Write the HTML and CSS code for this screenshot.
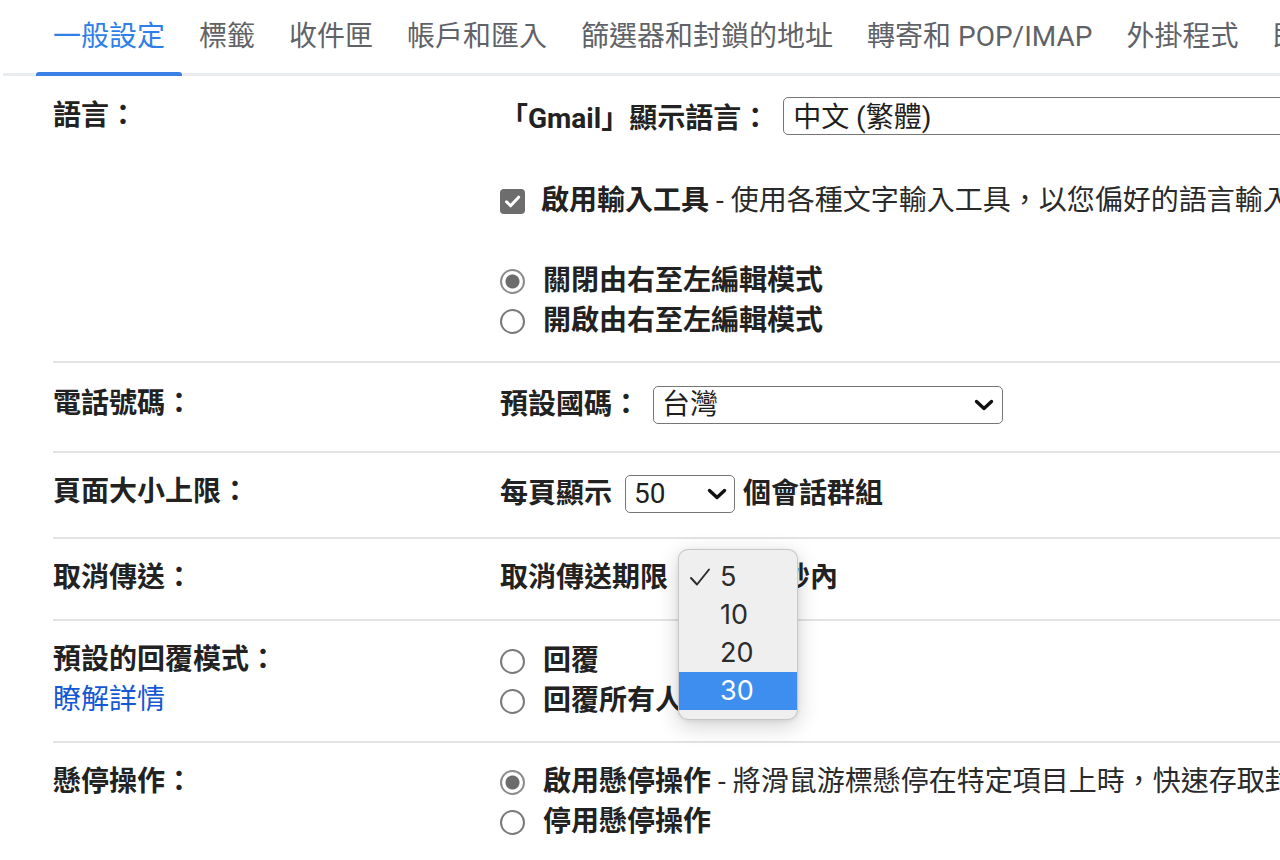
FILE: index.html
```html
<!DOCTYPE html>
<html lang="zh-Hant">
<head>
<meta charset="utf-8">
<title>設定</title>
<link rel="stylesheet" href="styles.css">
</head>
<body>
<nav class="tabs">
  <div class="tab active">一般設定</div>
  <div class="tab">標籤</div>
  <div class="tab">收件匣</div>
  <div class="tab">帳戶和匯入</div>
  <div class="tab">篩選器和封鎖的地址</div>
  <div class="tab">轉寄和 POP/IMAP</div>
  <div class="tab">外掛程式</div>
  <div class="tab">即時通訊和視訊會議</div>
</nav>

<main class="settings">
  <section class="row row-lang">
    <div class="label">語言：</div>
    <div class="value">
      <div class="line line-select">
        <span class="strong lang-caption">「Gmail」顯示語言：</span>
        <div class="select select-lang"><span class="select-text">中文 (繁體)</span></div>
      </div>
      <div class="line line-check">
        <span class="checkbox"><svg viewBox="0 0 25 25" width="25" height="25"><path d="M6.5 12.8 L10.6 16.8 L18.6 8.2" fill="none" stroke="#fff" stroke-width="3" stroke-linecap="round" stroke-linejoin="round"/></svg></span>
        <span class="strong">啟用輸入工具</span><span class="desc">&nbsp;- 使用各種文字輸入工具，以您偏好的語言輸入文字 - 編輯工具 - 瞭解詳情</span>
      </div>
      <div class="group group-rtl">
        <div class="line"><span class="radio checked"></span><span class="strong">關閉由右至左編輯模式</span></div>
        <div class="line"><span class="radio"></span><span class="strong">開啟由右至左編輯模式</span></div>
      </div>
    </div>
  </section>

  <section class="row row-phone">
    <div class="label">電話號碼：</div>
    <div class="value">
      <div class="line line-select">
        <span class="strong">預設國碼：</span>
        <div class="select select-phone"><span class="select-text">台灣</span>
          <svg class="chev" viewBox="0 0 20 12" width="20" height="12"><path d="M2.5 2.5 L10 9.5 L17.5 2.5" fill="none" stroke="#111" stroke-width="3.4" stroke-linecap="round" stroke-linejoin="round"/></svg>
        </div>
      </div>
    </div>
  </section>

  <section class="row row-page">
    <div class="label">頁面大小上限：</div>
    <div class="value">
      <div class="line line-select">
        <span class="strong">每頁顯示</span>
        <div class="select select-page"><span class="select-text">50</span>
          <svg class="chev" viewBox="0 0 20 12" width="20" height="12"><path d="M2.5 2.5 L10 9.5 L17.5 2.5" fill="none" stroke="#111" stroke-width="3.4" stroke-linecap="round" stroke-linejoin="round"/></svg>
        </div>
        <span class="strong after">個會話群組</span>
      </div>
    </div>
  </section>

  <section class="row row-undo">
    <div class="label">取消傳送：</div>
    <div class="value">
      <div class="line line-select">
        <span class="strong">取消傳送期限</span>
        <div class="select-wrap">
          <div class="select select-undo"><span class="select-text">5</span></div>
          <div class="popup">
            <div class="opt selected"><svg class="tick" viewBox="0 0 22 20" width="22" height="20"><path d="M2 11 L8 17.5 L20 2.5" fill="none" stroke="#2e2e2e" stroke-width="2" stroke-linecap="round" stroke-linejoin="round"/></svg>5</div>
            <div class="opt">10</div>
            <div class="opt">20</div>
            <div class="opt hl">30</div>
          </div>
        </div>
        <span class="strong after">秒內</span>
      </div>
    </div>
  </section>

  <section class="row row-reply">
    <div class="label">預設的回覆模式：<br><a class="link" href="#">瞭解詳情</a></div>
    <div class="value">
      <div class="line"><span class="radio"></span><span class="strong">回覆</span></div>
      <div class="line"><span class="radio"></span><span class="strong">回覆所有人</span></div>
    </div>
  </section>

  <section class="row row-hover">
    <div class="label">懸停操作：</div>
    <div class="value">
      <div class="line"><span class="radio checked"></span><span class="strong">啟用懸停操作</span><span class="desc">&nbsp;- 將滑鼠游標懸停在特定項目上時，快速存取封存、刪除、標示為已讀和延後功能。</span></div>
      <div class="line"><span class="radio"></span><span class="strong">停用懸停操作</span></div>
    </div>
  </section>
</main>
</body>
</html>
```
FILE: styles.css
```css
html, body {
  margin: 0;
  padding: 0;
}

body {
  width: 1280px;
  height: 860px;
  overflow: hidden;
  background: #ffffff;
  font-family: Roboto, "Noto Sans CJK TC", "Noto Sans", sans-serif;
  color: #202124;
}

/* Tabs */
.tabs {
  display: flex;
  height: 73px;
  margin-left: 3px;
  padding-left: 33px;
  border-bottom: 3px solid #eaedf0;
  white-space: nowrap;
}

.tab {
  flex: none;
  position: relative;
  padding: 0 17px;
  font-size: 28px;
  line-height: 73px;
  color: #5f6368;
}

.tab.active {
  color: #2f7fe9;
}

.tab.active::after {
  content: "";
  position: absolute;
  left: 0;
  right: 0;
  bottom: -3px;
  height: 4px;
  background: #3a80e6;
  border-radius: 3px 3px 0 0;
}

/* Settings rows */
.settings {
  margin-left: 53px;
}

.row {
  display: grid;
  grid-template-columns: 447px 1fr;
  border-bottom: 2px solid #e3e3e3;
}

.row:last-child {
  border-bottom: none;
}

.label {
  padding-top: 19px;
  font-size: 28px;
  line-height: 40px;
  font-weight: 700;
  color: #222;
  white-space: nowrap;
}

.value {
  padding: 20px 0 20px;
  font-size: 28px;
  line-height: 40px;
  white-space: nowrap;
  color: #222;
}

.line {
  display: flex;
  align-items: center;
  height: 40px;
}

.strong {
  font-weight: 700;
}

.desc {
  font-weight: 400;
  color: #2a2a2a;
}

.link {
  color: #1558d6;
  font-weight: 400;
  text-decoration: none;
}

/* row specifics */
.row-lang .label { padding-top: 20px; }
.row-lang .value { padding: 21px 0 20px; }
.row-lang .line-select { height: 38px; }
.row-lang .lang-caption { padding-top: 6px; }
.row-lang .line-check { margin-top: 46px; }
.row-lang .group-rtl { margin-top: 40px; }

.row-phone .label { padding-top: 21px; }
.row-phone .value { padding: 22px 0 26px; }

.row-page .value { padding: 21px 0 23px; }

.row-undo .value { padding: 19px 0 21px; }

.row-reply .value { padding: 20px 0 20px; }

.row-hover .value { padding: 19px 0 20px; }

/* select boxes */
.select {
  flex: none;
  position: relative;
  box-sizing: border-box;
  height: 38px;
  border: 1.5px solid #767676;
  border-radius: 5px;
  display: flex;
  align-items: center;
  justify-content: space-between;
  background: #fff;
  font-weight: 400;
  color: #1f1f1f;
}

.select-text {
  line-height: 34px;
}

.chev {
  flex: none;
}

.select-lang {
  width: 560px;
  margin-left: 14px;
  padding-left: 9px;
  align-self: flex-start;
}

.select-lang .select-text {
  padding-top: 4px;
}

.select-phone {
  width: 350px;
  margin-left: 13px;
  padding: 0 8px 0 8px;
}

.select-page {
  width: 110px;
  margin-left: 13px;
  padding: 0 7px 0 8px;
}

.after {
  margin-left: 8px;
}

.select-wrap {
  position: relative;
  flex: none;
  margin-left: 12px;
}

.select-undo {
  width: 94px;
  padding-left: 8px;
}

/* native-looking popup menu */
.popup {
  position: absolute;
  left: -2px;
  top: -10px;
  width: 120px;
  box-sizing: border-box;
  padding: 8px 0 9px;
  background: #efefef;
  border: 1px solid rgba(0, 0, 0, 0.16);
  border-radius: 10px;
  box-shadow: 0 6px 22px rgba(0, 0, 0, 0.18), 0 1px 4px rgba(0, 0, 0, 0.08);
  font-family: Inter, "Liberation Sans", sans-serif;
  font-size: 27px;
  font-weight: 400;
  color: #2b2b2b;
  z-index: 5;
}

.opt {
  position: relative;
  height: 38px;
  line-height: 38px;
  padding-left: 41px;
}

.opt .tick {
  position: absolute;
  left: 10px;
  top: 9px;
}

.opt.hl {
  background: #3e8ef0;
  color: #ffffff;
}

/* checkbox and radios */
.checkbox {
  flex: none;
  width: 25px;
  height: 25px;
  border-radius: 4px;
  background: #6d6d6d;
  margin-right: 16px;
  display: flex;
}

.radio {
  flex: none;
  box-sizing: border-box;
  width: 25px;
  height: 25px;
  border-radius: 50%;
  border: 2px solid #7a7a7a;
  background: #fff;
  margin-right: 18px;
}

.radio.checked {
  border-color: #8c8c8c;
  background: radial-gradient(circle, #6c6c6c 0 6.5px, #ffffff 7.5px);
}
```
